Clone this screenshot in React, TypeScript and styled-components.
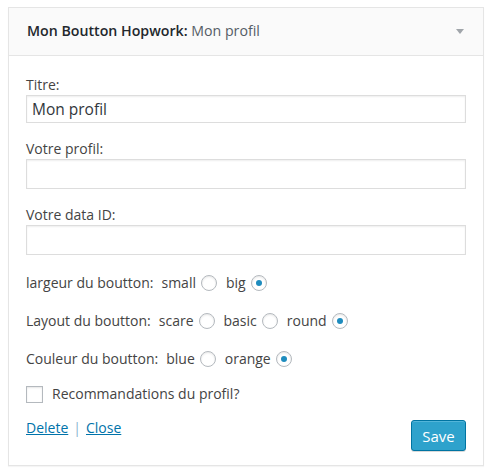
import React from "react";
import styled, { createGlobalStyle } from "styled-components";

const Global = createGlobalStyle`
  html, body { margin: 0; padding: 0; background: #ffffff; }
  body {
    font-family: "Open Sans", "Liberation Sans", sans-serif;
    font-size: 14px;
    line-height: 18px;
    color: #444444;
  }
  * { box-sizing: border-box; }
`;

const Page = styled.div`
  padding: 7px 8px;
`;

const Widget = styled.div`
  width: 476px;
  border: 1px solid #e5e5e5;
  background: #ffffff;
  box-shadow: 0 1px 1px rgba(0, 0, 0, 0.04);
`;

const Header = styled.div`
  height: 48px;
  display: flex;
  align-items: center;
  justify-content: space-between;
  padding: 0 19px 0 18px;
  background: #fafafa;
  border-bottom: 1px solid #e5e5e5;
`;

const Title = styled.h4`
  margin: 0;
  font-size: 14.2px;
  font-weight: 600;
  color: #23282d;
  line-height: 1;
`;

const Sub = styled.span`
  font-weight: 400;
  color: #555d66;
`;

const Arrow = styled.span`
  width: 0;
  height: 0;
  border-left: 4px solid transparent;
  border-right: 4px solid transparent;
  border-top: 5px solid #a0a5aa;
`;

const Body = styled.div`
  padding: 20px 17px 14px;
  display: flex;
  flex-direction: column;
`;

const Field = styled.div`
  display: flex;
  flex-direction: column;
  gap: 1px;
  margin-bottom: 17px;
`;

const Label = styled.label`
  display: block;
  line-height: 18px;
`;

const TextInput = styled.input<{ $h: number }>`
  width: 100%;
  height: ${(p) => p.$h}px;
  margin: 0;
  padding: 0 5px;
  border: 1px solid #dddddd;
  border-radius: 0;
  box-shadow: inset 0 1px 2px rgba(0, 0, 0, 0.07);
  background: #ffffff;
  font-family: "Open Sans", "Liberation Sans", sans-serif;
  font-size: 15.5px;
  color: #32373c;
  outline: none;
`;

const Row = styled.div`
  display: flex;
  align-items: center;
  height: 20px;
  margin: 1px 0 17px;
`;

const RowLabel = styled.span`
  margin-right: 8px;
`;

const Option = styled.label`
  display: flex;
  align-items: center;
  margin-right: 9px;
`;

const Radio = styled.input`
  appearance: none;
  -webkit-appearance: none;
  width: 16px;
  height: 16px;
  margin: 0 0 0 5px;
  border: 1px solid #b4b9be;
  border-radius: 50%;
  background: #ffffff;
  box-shadow: inset 0 1px 2px rgba(0, 0, 0, 0.1);
  display: inline-flex;
  align-items: center;
  justify-content: center;
  &:checked::before {
    content: "";
    width: 6px;
    height: 6px;
    border-radius: 50%;
    background: #1e8cbe;
  }
`;

const CheckRow = styled.label`
  display: flex;
  align-items: center;
  height: 20px;
  margin: -2px 0 15px;
`;

const Check = styled.input`
  appearance: none;
  -webkit-appearance: none;
  width: 17px;
  height: 17px;
  margin: 0 9px 0 0;
  border: 1px solid #b4b9be;
  background: #ffffff;
  box-shadow: inset 0 1px 2px rgba(0, 0, 0, 0.1);
`;

const Footer = styled.div`
  display: flex;
  justify-content: space-between;
  align-items: flex-start;
`;

const Links = styled.div`
  line-height: 18px;
`;

const Link = styled.a`
  color: #0073aa;
  text-decoration: underline;
`;

const Sep = styled.span`
  margin: 0 5px;
  color: #8ab4cf;
`;

const SaveButton = styled.button`
  margin-top: 1px;
  height: 31px;
  width: 55px;
  padding: 0;
  border: 1px solid #0074a2;
  border-radius: 3px;
  background: #2ea2cc;
  color: #ffffff;
  font-family: "Open Sans", "Liberation Sans", sans-serif;
  font-size: 15px;
  box-shadow: inset 0 1px 0 rgba(120, 200, 230, 0.5), 0 1px 0 rgba(0, 0, 0, 0.15);
  cursor: pointer;
`;

type Group = { label: string; name: string; options: string[]; checked: string };

const groups: Group[] = [
  { label: "largeur du boutton:", name: "size", options: ["small", "big"], checked: "big" },
  { label: "Layout du boutton:", name: "layout", options: ["scare", "basic", "round"], checked: "round" },
  { label: "Couleur du boutton:", name: "color", options: ["blue", "orange"], checked: "orange" },
];

export default function App() {
  return (
    <Page>
      <Global />
      <Widget>
        <Header>
          <Title>
            Mon Boutton Hopwork: <Sub>Mon profil</Sub>
          </Title>
          <Arrow />
        </Header>
        <Body>
          <Field>
            <Label>Titre:</Label>
            <TextInput $h={28} defaultValue="Mon profil" />
          </Field>
          <Field>
            <Label>Votre profil:</Label>
            <TextInput $h={30} />
          </Field>
          <Field>
            <Label>Votre data ID:</Label>
            <TextInput $h={30} />
          </Field>
          {groups.map((g) => (
            <Row key={g.name}>
              <RowLabel>{g.label}</RowLabel>
              {g.options.map((o) => (
                <Option key={o}>
                  {o}
                  <Radio type="radio" name={g.name} defaultChecked={o === g.checked} />
                </Option>
              ))}
            </Row>
          ))}
          <CheckRow>
            <Check type="checkbox" />
            Recommandations du profil?
          </CheckRow>
          <Footer>
            <Links>
              <Link href="#">Delete</Link>
              <Sep>|</Sep>
              <Link href="#">Close</Link>
            </Links>
            <SaveButton>Save</SaveButton>
          </Footer>
        </Body>
      </Widget>
    </Page>
  );
}
